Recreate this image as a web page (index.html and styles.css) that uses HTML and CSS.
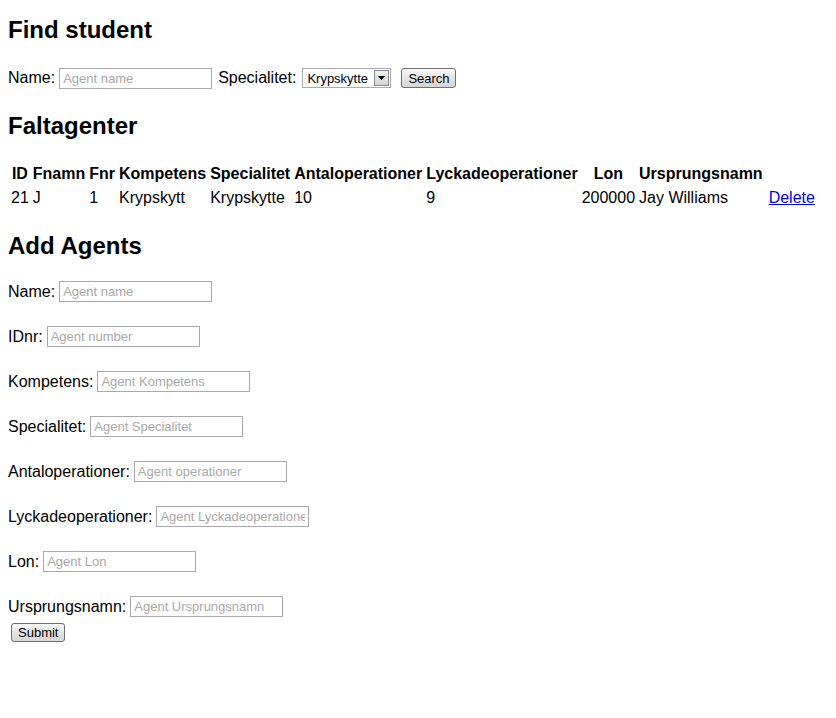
FILE: index.html
```html
<!DOCTYPE html>
<html>
<head>
<meta charset="utf-8">
<title>Agents</title>
<link rel="stylesheet" href="styles.css">
</head>
<body>
<h2 class="title title-first">Find student</h2>
<form class="find-row">
  <label class="lbl">Name:</label>
  <input class="field" type="text" placeholder="Agent name">
  <label class="lbl lbl-spec">Specialitet:</label>
  <span class="select-wrap">
    <select class="select"><option>Krypskytte</option></select>
    <span class="select-arrow"><svg width="7" height="4" viewBox="0 0 7 4"><path d="M0 0h7L3.5 4z" fill="#000"/></svg></span>
  </span>
  <button class="btn btn-search" type="button">Search</button>
</form>

<h2 class="title title-mid">Faltagenter</h2>
<table class="agents">
  <thead>
    <tr>
      <th>ID</th><th>Fnamn</th><th>Fnr</th><th>Kompetens</th><th>Specialitet</th><th>Antaloperationer</th><th>Lyckadeoperationer</th><th>Lon</th><th>Ursprungsnamn</th><th></th>
    </tr>
  </thead>
  <tbody>
    <tr>
      <td>21</td><td>J</td><td>1</td><td>Krypskytt</td><td>Krypskytte</td><td>10</td><td>9</td><td>200000</td><td>Jay Williams</td><td class="del-cell"><a href="#" class="del">Delete</a></td>
    </tr>
  </tbody>
</table>

<h2 class="title title-add">Add Agents</h2>
<form class="add-form">
  <div class="row"><label class="lbl">Name:</label><input class="field" type="text" placeholder="Agent name"></div>
  <div class="row"><label class="lbl">IDnr:</label><input class="field" type="text" placeholder="Agent number"></div>
  <div class="row"><label class="lbl">Kompetens:</label><input class="field" type="text" placeholder="Agent Kompetens"></div>
  <div class="row"><label class="lbl">Specialitet:</label><input class="field" type="text" placeholder="Agent Specialitet"></div>
  <div class="row"><label class="lbl">Antaloperationer:</label><input class="field" type="text" placeholder="Agent operationer"></div>
  <div class="row"><label class="lbl">Lyckadeoperationer:</label><input class="field" type="text" placeholder="Agent Lyckadeoperationer"></div>
  <div class="row"><label class="lbl">Lon:</label><input class="field" type="text" placeholder="Agent Lon"></div>
  <div class="row"><label class="lbl">Ursprungsnamn:</label><input class="field" type="text" placeholder="Agent Ursprungsnamn"></div>
  <div class="submit-row"><button class="btn btn-submit" type="submit">Submit</button></div>
</form>
</body>
</html>
```

FILE: styles.css
```css
html, body {
  background: #fff;
}
body {
  margin: 0;
  padding: 0 8px;
  font-family: "Liberation Sans", Arial, sans-serif;
  font-size: 16px;
  line-height: 18px;
  color: #000;
}
.title {
  font-size: 24px;
  line-height: 28px;
  font-weight: bold;
  margin: 0;
}
.title-first { margin-top: 16px; }
.title-mid { margin-top: 23px; }
.title-add { margin-top: 22px; }

.find-row {
  display: flex;
  align-items: center;
  margin-top: 23px;
  height: 22px;
}
.lbl {
  margin-right: 4px;
  white-space: nowrap;
}
.lbl-spec {
  margin-left: 6px;
  margin-right: 6px;
}
.field {
  box-sizing: border-box;
  width: 153px;
  height: 21px;
  margin: 0;
  padding: 0 3px;
  border: 1px solid #a9a9a9;
  font-family: "Liberation Sans", Arial, sans-serif;
  font-size: 13px;
  color: #000;
  background: #fff;
  outline: none;
}
.field::placeholder {
  color: #a9a9a9;
  opacity: 1;
}
.select-wrap {
  position: relative;
  display: inline-block;
  width: 89px;
  height: 20px;
}
.select {
  -webkit-appearance: none;
  appearance: none;
  box-sizing: border-box;
  width: 89px;
  height: 20px;
  margin: 0;
  padding: 0 0 0 4px;
  border: 1px solid #a5acb5;
  border-radius: 0;
  background: #fff;
  font-family: "Liberation Sans", Arial, sans-serif;
  font-size: 13px;
  color: #000;
  outline: none;
}
.select-arrow {
  position: absolute;
  top: 2px;
  right: 2px;
  box-sizing: border-box;
  width: 15px;
  height: 16px;
  border: 1px solid #8a8a8a;
  background: linear-gradient(#f2f2f2, #d4d4d4);
  display: flex;
  align-items: center;
  justify-content: center;
  pointer-events: none;
}
.btn {
  box-sizing: border-box;
  margin: 0;
  padding: 0 6px;
  border: 1px solid #707070;
  border-radius: 3px;
  background: linear-gradient(#fbfbfb, #e4e4e4 50%, #d6d6d6);
  font-family: "Liberation Sans", Arial, sans-serif;
  font-size: 13px;
  color: #000;
}
.btn-search {
  margin-left: 10px;
  width: 55px;
  height: 20px;
}

.agents {
  margin-top: 22px;
  border-collapse: separate;
  border-spacing: 2px;
}
.agents th, .agents td {
  padding: 1px;
  line-height: 18px;
  white-space: nowrap;
}
.agents th {
  font-weight: bold;
  text-align: center;
  padding-bottom: 3px;
}
.agents td {
  text-align: left;
}
.agents .del-cell {
  padding-left: 3px;
}
.del {
  color: #0000ee;
  text-decoration: underline;
}

.add-form {
  display: flex;
  flex-direction: column;
  gap: 24px;
  margin-top: 21px;
}
.row {
  display: flex;
  align-items: center;
  height: 21px;
}
.submit-row {
  margin-top: -18px;
  padding-left: 3px;
}
.btn-submit {
  width: 54px;
  height: 19px;
}
```
